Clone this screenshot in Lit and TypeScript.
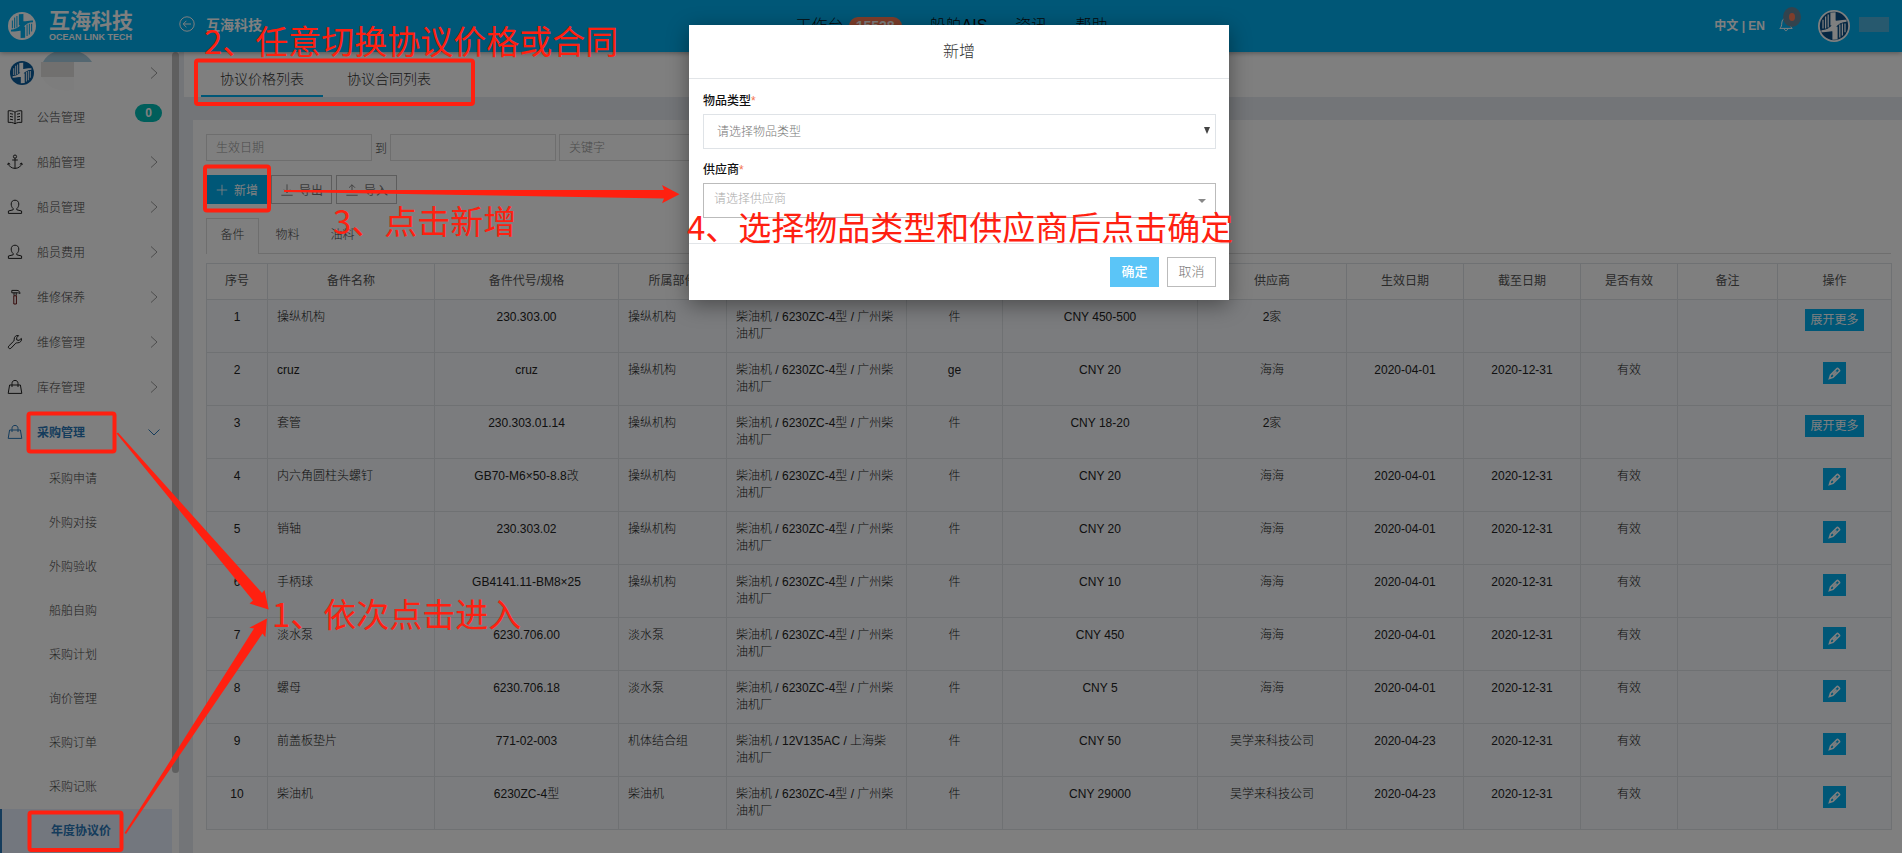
import { LitElement, html, css, svg, nothing } from "lit";
import { customElement } from "lit/decorators.js";
import { classMap } from "lit/directives/class-map.js";

const emblem = svg`
  <circle cx="16" cy="16" r="16" class="rim"/>
  <circle cx="16" cy="16" r="14.2" class="disc"/>
  <path class="cut" d="M12.4 2.6 L17.6 2.2 V10.6 C19.600 11 24 9.400 28.600 9.800 V11.800 C24 11.800 20.400 13.800 17 18 C16 16.600 14.800 15.600 12.400 15.200 Z"/>
  <path class="cut" d="M19.600 29.400 L14.400 29.800 V21.400 C12.400 21 8 22.600 3.400 22.200 V20.200 C8 20.200 11.600 18.200 15 14 C16 15.400 17.200 16.400 19.600 16.800 Z"/>
  <path class="cut" d="M4.400 9.800 H5.600 V18.600 H4.400 Z M7 6.400 H8.200 V18.600 H7 Z M9.600 4.600 H10.800 V17.600 H9.600 Z M21.200 14.400 H22.400 V27.400 H21.200 Z M23.800 13.400 H25 V25.600 H23.800 Z M26.400 13.400 H27.600 V22.200 H26.400 Z"/>`;

const icons = {
  book: svg`<path d="M8 3.2 C6 1.8 3.6 1.6 1.2 1.8 V13.4 C3.6 13.2 6 13.4 8 14.8 C10 13.4 12.4 13.2 14.8 13.4 V1.8 C12.4 1.6 10 1.8 8 3.2 V14.8 M3 4.6 L6 5.2 M3 7.4 L6 8 M3 10.2 L6 10.8 M13 4.6 L10 5.2 M13 7.4 L10 8 M13 10.2 L10 10.8"/>`,
  anchor: svg`<circle cx="8" cy="2.6" r="1.6"/><path d="M8 4.2 V14.4 M5.2 6 H10.8 M1.4 9.2 C1.8 12.6 4.6 14.2 8 14.4 C11.4 14.2 14.2 12.6 14.6 9.2 M0.6 10.8 L1.4 9 L3.2 10.2 M15.4 10.8 L14.6 9 L12.8 10.2"/>`,
  user: svg`<path d="M6.2 9.6 C4.8 8.4 4.2 6.8 4.2 5 C4.2 2.6 5.8 1.2 8 1.2 C10.2 1.2 11.8 2.6 11.8 5 C11.8 6.8 11.2 8.4 9.8 9.6 V10.8 L14.6 12 V14.4 H1.4 V12 L6.2 10.8 Z"/>`,
  hammer: svg`<path d="M4.8 1.4 H10 C11.8 1.4 12.8 2.6 13 4.6 C12 3.8 11 3.8 10 3.8 H4.8 Z M7 3.8 V6.6 M9.2 3.8 V6.6"/><path d="M6.8 6.8 H9.4 V15 H6.8 Z" stroke="#6b1212"/>`,
  wrench: svg`<path d="M14.4 4.4 L12 6.4 L9.8 6 L9.6 3.8 L11.6 1.6 C9.4 1 7 2.6 7.2 5.2 C7.2 6 7.2 6.4 6.8 7 L1.6 12.2 C0.6 13.6 2.4 15.4 3.8 14.4 L8.8 9.2 C9.4 8.8 10 8.8 10.8 8.8 C13.4 8.8 15 6.6 14.4 4.4 Z"/>`,
  bag: svg`<path d="M2.6 6 H13.4 L14.8 14.4 H1.2 Z M5 8 V4.4 C5 2.6 6.2 1.4 8 1.4 C9.8 1.4 11 2.6 11 4.4 V8"/>`,
  right: svg`<path d="M5 2.5 L11 8 L5 13.5"/>`,
  down: svg`<path d="M2.5 5.5 L8 11 L13.5 5.5"/>`,
  plus: svg`<path d="M8 2 V14 M2 8 H14"/>`,
  download: svg`<path d="M8 1.5 V11 M4.6 7.6 L8 11 L11.4 7.6 M1.5 14 H14.5"/>`,
  upload: svg`<path d="M8 11.4 V2 M4.6 5.4 L8 2 L11.4 5.4 M1.5 14 H14.5"/>`,
  back: svg`<circle cx="8" cy="8" r="7.2"/><path d="M12 8 H4.4 M7.4 4.8 L4.2 8 L7.4 11.2"/>`,
  bell: svg`<path d="M1.8 12.4 H14.2 C12.6 11 12.4 9.6 12.2 7 C12 3.8 10.4 2.2 8 2.2 C5.6 2.2 4 3.8 3.8 7 C3.6 9.6 3.4 11 1.8 12.4 Z M6.4 13 C6.6 15.2 9.4 15.2 9.6 13"/>`,
  pencil: svg`<path d="M1.8 14.2 L3.2 9.8 L10.8 2.2 C11.4 1.600 12 1.600 12.600 2.200 L13.800 3.400 C14.400 4 14.400 4.600 13.800 5.200 L6.200 12.800 Z M6 10 L10.4 5.600"/>`,
};
type IconName = keyof typeof icons;
const icon = (name: IconName, cls = "") =>
  html`<svg class="icon ${cls}" viewBox="0 0 16 16" aria-hidden="true">${icons[name]}</svg>`;

const menu: { icon: IconName; label: string; badge?: string; open?: boolean }[] = [
  { icon: "book", label: "公告管理", badge: "0" },
  { icon: "anchor", label: "船舶管理" },
  { icon: "user", label: "船员管理" },
  { icon: "user", label: "船员费用" },
  { icon: "hammer", label: "维修保养" },
  { icon: "wrench", label: "维修管理" },
  { icon: "bag", label: "库存管理" },
  { icon: "bag", label: "采购管理", open: true },
];
const submenu = ["采购申请", "外购对接", "外购验收", "船舶自购", "采购计划", "询价管理", "采购订单", "采购记账", "年度协议价"];

const columns: [string, number, boolean?][] = [
  ["序号", 61], ["备件名称", 167, true], ["备件代号/规格", 184], ["所属部件", 108, true], ["所属设备", 180, true],
  ["单位", 96], ["价格", 195], ["供应商", 149], ["生效日期", 117], ["截至日期", 117], ["是否有效", 97], ["备注", 100], ["操作", 114],
];
const engine = "柴油机 / 6230ZC-4型 / 广州柴油机厂";
const rows: string[][] = [
  ["1", "操纵机构", "230.303.00", "操纵机构", engine, "件", "CNY 450-500", "2家", "", "", "", ""],
  ["2", "cruz", "cruz", "操纵机构", engine, "ge", "CNY 20", "海海", "2020-04-01", "2020-12-31", "有效", ""],
  ["3", "套管", "230.303.01.14", "操纵机构", engine, "件", "CNY 18-20", "2家", "", "", "", ""],
  ["4", "内六角圆柱头螺钉", "GB70-M6×50-8.8改", "操纵机构", engine, "件", "CNY 20", "海海", "2020-04-01", "2020-12-31", "有效", ""],
  ["5", "销轴", "230.303.02", "操纵机构", engine, "件", "CNY 20", "海海", "2020-04-01", "2020-12-31", "有效", ""],
  ["6", "手柄球", "GB4141.11-BM8×25", "操纵机构", engine, "件", "CNY 10", "海海", "2020-04-01", "2020-12-31", "有效", ""],
  ["7", "淡水泵", "6230.706.00", "淡水泵", engine, "件", "CNY 450", "海海", "2020-04-01", "2020-12-31", "有效", ""],
  ["8", "螺母", "6230.706.18", "淡水泵", engine, "件", "CNY 5", "海海", "2020-04-01", "2020-12-31", "有效", ""],
  ["9", "前盖板垫片", "771-02-003", "机体结合组", "柴油机 / 12V135AC / 上海柴油机厂", "件", "CNY 50", "吴学来科技公司", "2020-04-23", "2020-12-31", "有效", ""],
  ["10", "柴油机", "6230ZC-4型", "柴油机", engine, "件", "CNY 29000", "吴学来科技公司", "2020-04-23", "2020-12-31", "有效", ""],
];

const shared = css`
  * { box-sizing: border-box; }
  button, input, select { font: inherit; color: inherit; margin: 0; border-radius: 0; }
  button { cursor: pointer; }
  a { color: inherit; text-decoration: none; }
  .icon { width: 16px; height: 16px; flex: none; fill: none; stroke: currentColor; stroke-width: 1; }
  .rim { fill: var(--rim); }
  .disc { fill: var(--disc); }
  .cut { fill: var(--cut); }
`;

@customElement("top-bar")
class TopBar extends LitElement {
  static styles = [shared, css`
    :host { display: block; position: relative; z-index: 1; }
    .bar { height: 52px; display: flex; align-items: center; background: #00aeef; color: #fff; box-shadow: 0 1px 5px rgba(0,0,0,.35); }
    .brand { width: 179px; padding-left: 8px; display: flex; align-items: center; gap: 13px; }
    .mark { width: 28px; height: 28px; --rim: #fff; --disc: #fff; --cut: #00aeef; }
    .names { display: grid; line-height: 1; }
    .cn { font-size: 21px; line-height: 22px; font-weight: 700; }
    .en { font-size: 9px; line-height: 10px; font-weight: 700; white-space: nowrap; }
    .title { display: flex; align-items: center; gap: 11px; font-size: 14px; font-weight: 700; padding-bottom: 4px; }
    .side { flex: 1 1 0; display: flex; align-items: center; }
    .nav { display: flex; gap: 28px; font-size: 16px; line-height: 20px; color: #111; padding-left: 14px; }
    .nav a { display: flex; align-items: center; gap: 5px; }
    .badge { background: #ff7d57; color: #fff; border-radius: 9px; font-size: 14px; line-height: 18px; font-weight: 700; padding: 0 7px; }
    .tools { justify-content: flex-end; padding-right: 13px; font-size: 12px; font-weight: 700; }
    .lang { padding-bottom: 3px; }
    .bell { position: relative; margin: 0 24px 4px 13px; display: flex; }
    .dot { position: absolute; left: 5px; top: -9px; width: 18px; height: 20px; border-radius: 50%; border: 6px solid #64879b; background: #ff7d57; }
    .avatar { width: 32px; height: 32px; --rim: #fff; --disc: #0a4f86; --cut: #fff; }
    .account { width: 30px; height: 15px; background: #4fb3dc; margin: 0 0 4px 9px; }
  `];
  render() {
    return html`
      <header class="bar">
        <div class="side">
          <a class="brand" href="#">
            <svg class="mark" viewBox="0 0 32 32" aria-hidden="true">${emblem}</svg>
            <span class="names"><span class="cn">互海科技</span><span class="en">OCEAN LINK TECH</span></span>
          </a>
          <span class="title">${icon("back")}互海科技</span>
        </div>
        <nav class="nav">
          <a href="#">工作台<span class="badge">15528</span></a>
          <a href="#">船舶AIS</a><a href="#">资讯</a><a href="#">帮助</a>
        </nav>
        <div class="side tools">
          <span class="lang"><a href="#">中文</a> | <a href="#">EN</a></span>
          <a class="bell" href="#" aria-label="消息">${icon("bell")}<span class="dot"></span></a>
          <svg class="avatar" viewBox="0 0 32 32" aria-hidden="true">${emblem}</svg>
          <span class="account"></span>
        </div>
      </header>`;
  }
}

@customElement("side-menu")
class SideMenu extends LitElement {
  static styles = [shared, css`
    :host { display: flex; width: 179px; flex: none; background: #fff; overflow: hidden; color: #444; font-size: 12px; }
    .menu { width: 172px; flex: none; }
    .thumb { width: 7px; height: 721px; background: #bfbfbf; border-radius: 4px; }
    .user { height: 42px; display: flex; align-items: center; padding: 0 10px; position: relative; }
    .mark { width: 24px; height: 24px; --rim: #0a5c9c; --disc: #0a5c9c; --cut: #fff; }
    .veil { position: absolute; left: 41px; top: 0; }
    .chev { margin-left: auto; color: #999; }
    .item { height: 45px; display: flex; align-items: center; padding: 0 10px 0 7px; }
    .item .label { margin-left: 14px; }
    .item .icon { color: #222; }
    .item .chev { color: #999; }
    .item.open, .item.open .icon { color: #2a78b8; }
    .open .label { font-weight: 700; }
    .count { margin-left: auto; background: #00bdb6; color: #fff; font-weight: 700; line-height: 18px; border-radius: 9px; padding: 0 10px; font-size: 12px; margin-bottom: 7px; }
    .sub { padding-top: 3px; }
    .leaf { display: block; line-height: 44px; padding-left: 49px; }
    .leaf.current { border-left: 2px solid #2a78b8; background: #e6eefc; color: #2a78b8; font-weight: 700; }
  `];
  render() {
    return html`
      <nav class="menu">
        <a class="user" href="#">
          <svg class="mark" viewBox="0 0 32 32" aria-hidden="true">${emblem}</svg>
          <svg class="veil" width="52" height="40" aria-hidden="true">
            <path fill="#a9cfe2" d="M2 10 C6 2 14 -2 26 -2 C38 -2 46 2 51 10 Z"/>
            <path fill="#e2e0df" d="M0 10 H33 V25 H0 Z"/><path fill="#fafafa" d="M1 25 H33 V38 C18 40 6 36 1 25 Z"/>
          </svg>
          ${icon("right", "chev")}
        </a>
        ${menu.map(m => html`
          <a class="item ${classMap({ open: !!m.open })}" href="#">
            ${icon(m.icon)}<span class="label">${m.label}</span>
            ${m.badge ? html`<span class="count">${m.badge}</span>` : icon(m.open ? "down" : "right", "chev")}
          </a>`)}
        <div class="sub">
          ${submenu.map((s, i) => html`<a class="leaf ${classMap({ current: i === submenu.length - 1 })}" href="#">${s}</a>`)}
        </div>
      </nav>
      <div class="thumb"></div>`;
  }
}

@customElement("price-page")
class PricePage extends LitElement {
  static styles = [shared, css`
    :host { display: flex; flex-direction: column; flex: 1; min-width: 0; padding-left: 5px; color: #444; font-size: 12px; }
    .tabs { display: flex; gap: 5px; background: #fff; padding-left: 17px; height: 45px; font-size: 14px; color: #333; }
    .tab { padding: 12px 19px 0; line-height: 31px; border-bottom: 2px solid transparent; }
    .tab.on { border-color: #00aeef; }
    .card { flex: 1; margin: 23px 0 0 9px; background: #fff; padding: 14px 11px 20px 13px; }
    .filters { display: flex; align-items: center; gap: 3px; }
    .field { width: 166px; height: 27px; border: 1px solid #ddd; padding: 0 9px; background: #fff; outline: none; }
    .field::placeholder { color: #999; }
    .actions { display: flex; gap: 4px; margin-top: 14px; }
    .btn { width: 61px; height: 29px; padding: 0; display: flex; align-items: center; justify-content: center; gap: 5px; background: #fff; border: 1px solid #bbb; color: #777; font-weight: 400; }
    .btn .icon { width: 14px; height: 14px; }
    .btn.primary { background: #00aeef; border-color: #00aeef; color: #fff; }
    .kinds { display: flex; gap: 2px; margin-top: 14px; height: 36px; border-bottom: 1px solid #ddd; }
    .kind { width: 53px; height: 36px; line-height: 32px; text-align: center; border: 1px solid transparent; border-bottom: 0; }
    .kind.on { border-color: #ddd; background: #fff; }
    .grid { width: 100%; margin-top: 9px; table-layout: fixed; border-collapse: collapse; line-height: 17px; color: #222; }
    .grid th { font-weight: 400; height: 36px; padding: 0; border: 1px solid #dfe2e6; color: #555; }
    .grid td { height: 53px; padding: 9px; border: 1px solid #dfe2e6; background: #f7f9fc; vertical-align: top; text-align: center; overflow-wrap: break-word; }
    .grid .left { text-align: left; }
    .act { height: 22px; padding: 0 5px; border: 0; background: #00aeef; color: #fff; font-weight: 400; line-height: 20px; display: inline-flex; align-items: center; vertical-align: top; }
    .act .icon { width: 13px; height: 13px; stroke-width: 2; }
  `];
  render() {
    return html`
      <nav class="tabs"><a class="tab on" href="#">协议价格列表</a><a class="tab" href="#">协议合同列表</a></nav>
      <main class="card">
        <div class="filters">
          <input class="field" aria-label="生效日期" placeholder="生效日期"><span>到</span>
          <input class="field" aria-label="截至日期"><input class="field" aria-label="关键字" placeholder="关键字">
        </div>
        <div class="actions">
          <button class="btn primary">${icon("plus")}新增</button>
          <button class="btn">${icon("download")}导出</button>
          <button class="btn">${icon("upload")}导入</button>
        </div>
        <nav class="kinds"><a class="kind on" href="#">备件</a><a class="kind" href="#">物料</a><a class="kind" href="#">油料</a></nav>
        <table class="grid">
          <colgroup>${columns.map(c => html`<col style="width:${c[1]}px">`)}</colgroup>
          <thead><tr>${columns.map(c => html`<th>${c[0]}</th>`)}</tr></thead>
          <tbody>${rows.map(r => html`<tr>
            ${r.map((v, i) => html`<td class=${columns[i][2] ? "left" : nothing}>${v}</td>`)}
            <td>${r[8]
              ? html`<button class="act" aria-label="编辑">${icon("pencil")}</button>`
              : html`<button class="act">展开更多</button>`}</td>
          </tr>`)}</tbody>
        </table>
      </main>`;
  }
}

@customElement("create-dialog")
class CreateDialog extends LitElement {
  static styles = [shared, css`
    :host { display: block; width: 540px; background: #fff; box-shadow: 0 5px 20px rgba(0,0,0,.4); font-size: 12px; color: #777; }
    .title { margin: 0; height: 54px; line-height: 54px; text-align: center; font-size: 16px; font-weight: 300; color: #333; border-bottom: 1px solid #e2e5e8; }
    .body { padding: 14px 13px 25px 14px; }
    .label { display: block; line-height: 17px; margin-bottom: 4px; font-weight: 500; color: #111; }
    .star { color: #f3734f; }
    .box { position: relative; margin-bottom: 13px; }
    .body .box:last-child { margin-bottom: 0; }
    .pick { display: block; width: 100%; height: 35px; border: 1px solid #dfe3e7; background: #fff; appearance: none; padding: 0 13px; outline: none; }
    .combo { border-color: #bbb; padding: 0 10px 4px; }
    .combo::placeholder { color: #aaa; }
    .arrow { position: absolute; right: 6px; top: 13px; border: 3px solid transparent; border-top: 7px solid #444; border-bottom: 0; }
    .arrow.flat { right: 10px; top: 16px; border-width: 4px 4px 0; border-top-color: #888; }
    .foot { border-top: 1px solid #e2e5e8; padding: 13px; display: flex; justify-content: flex-end; gap: 8px; }
    .btn { height: 30px; width: 49px; padding: 0 0 3px; border: 1px solid #bbb; background: #fff; font-size: 13px; }
    .btn.ok { background: #5bc5f7; border-color: #5bc5f7; color: #fff; font-weight: 500; }
  `];
  render() {
    return html`
      <section role="dialog" aria-label="新增">
        <h2 class="title">新增</h2>
        <div class="body">
          <label class="label" for="kind">物品类型<span class="star">*</span></label>
          <div class="box"><select class="pick" id="kind"><option>请选择物品类型</option></select><span class="arrow"></span></div>
          <label class="label" for="vendor">供应商<span class="star">*</span></label>
          <div class="box"><input class="pick combo" id="vendor" placeholder="请选择供应商"><span class="arrow flat"></span></div>
        </div>
        <div class="foot"><button class="btn ok">确定</button><button class="btn">取消</button></div>
      </section>`;
  }
}

@customElement("guide-marks")
class GuideMarks extends LitElement {
  static styles = css`
    :host { position: absolute; inset: 0; overflow: hidden; pointer-events: none; color: #ff2010; }
    .shapes { position: absolute; left: 0; top: 0; width: 1902px; height: 853px; }
    .note { position: absolute; margin: 0; font-size: 33px; line-height: 40px; white-space: nowrap; font-family: "Noto Sans CJK SC", sans-serif; font-weight: 400; }
    .enter { left: 272px; top: 593px; }
    .switch { left: 204px; top: 20px; }
    .add { left: 333px; top: 200px; }
    .confirm { left: 687px; top: 206px; }
  `;
  render() {
    return html`
      <svg class="shapes" viewBox="0 0 1902 853" aria-hidden="true">
        <g fill="none" stroke="currentColor" stroke-width="4">
          <rect x="196" y="60.5" width="277" height="43.5" rx="2"/>
          <rect x="205" y="166.5" width="64" height="44" rx="2"/>
          <rect x="28.5" y="413.5" width="86" height="38" rx="2"/>
          <rect x="29.5" y="812.5" width="92" height="37.5" rx="2"/>
        </g>
        <g fill="currentColor">
          <path d="M116.5 433.5 L118 432.5 L262 593 L264.5 590 L268.7 609.5 L249.5 603.5 L253 600.5 Z"/>
          <path d="M124.5 833 L126 834 L262.5 633.5 L265.3 637.3 L267 618.5 L249.3 627.7 L254 628.5 Z"/>
          <path d="M284 190 L664 190 L662 185 L679.5 194.3 L662 203.3 L664 198.5 L284 192 Z"/>
        </g>
      </svg>
      <p class="note enter">1、依次点击进入</p>
      <p class="note switch">2、任意切换协议价格或合同</p>
      <p class="note add">3、点击新增</p>
      <p class="note confirm">4、选择物品类型和供应商后点击确定</p>`;
  }
}

@customElement("app-root")
class AppRoot extends LitElement {
  static styles = css`
    :host { display: flex; flex-direction: column; position: relative; height: 100vh; overflow: hidden; background: #e7ebf0; font-family: "Liberation Sans", "Noto Sans CJK SC", sans-serif; font-weight: 300; }
    .main { display: flex; flex: 1; min-height: 0; }
    .backdrop { position: absolute; inset: 0; z-index: 2; background: rgba(0,0,0,.5); display: flex; justify-content: center; align-items: flex-start; padding: 25px 0 0 16px; }
    guide-marks { z-index: 3; }
  `;
  render() {
    return html`
      <top-bar></top-bar>
      <div class="main"><side-menu></side-menu><price-page></price-page></div>
      <div class="backdrop"><create-dialog></create-dialog></div>
      <guide-marks></guide-marks>`;
  }
}
